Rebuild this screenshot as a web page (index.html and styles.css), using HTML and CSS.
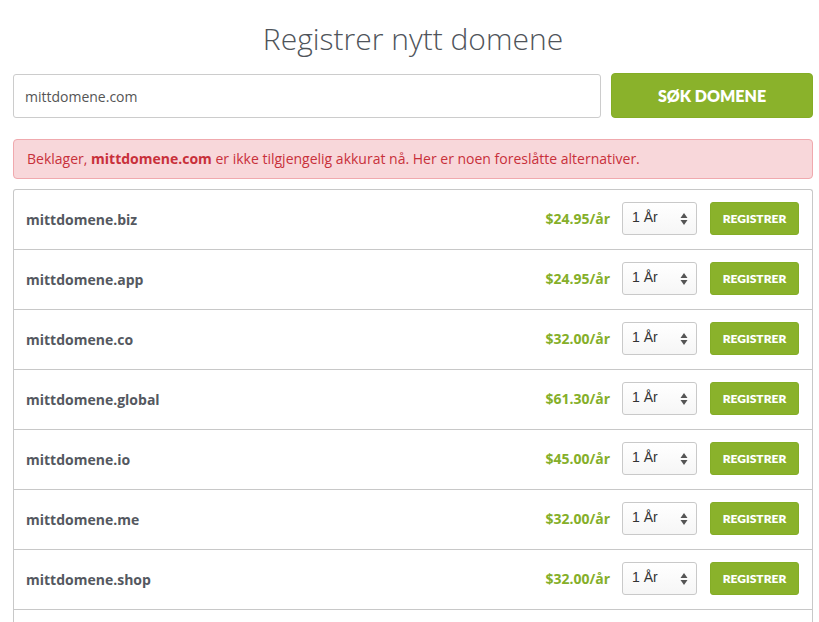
FILE: index.html
```html
<!DOCTYPE html>
<html lang="no">
<head>
<meta charset="utf-8">
<title>Registrer nytt domene</title>
<link rel="stylesheet" href="styles.css">
</head>
<body>
<div class="page">
  <h1 class="title">Registrer nytt domene</h1>
  <form class="search">
    <input class="search-input" type="text" value="mittdomene.com">
    <button class="search-btn" type="button">SØK DOMENE</button>
  </form>
  <div class="alert">Beklager, <strong>mittdomene.com</strong> er ikke tilgjengelig akkurat nå. Her er noen foreslåtte alternativer.</div>
  <div class="list">
    <div class="row"><span class="name">mittdomene.biz</span><span class="price">$24.95/år</span><div class="select"><span>1 År</span><svg class="arrows" width="8" height="14" viewBox="0 0 8 14"><path d="M4 1 L7.5 6 H0.5 Z M4 13 L7.5 8 H0.5 Z" fill="#555"/></svg></div><button class="reg" type="button">REGISTRER</button></div>
    <div class="row"><span class="name">mittdomene.app</span><span class="price">$24.95/år</span><div class="select"><span>1 År</span><svg class="arrows" width="8" height="14" viewBox="0 0 8 14"><path d="M4 1 L7.5 6 H0.5 Z M4 13 L7.5 8 H0.5 Z" fill="#555"/></svg></div><button class="reg" type="button">REGISTRER</button></div>
    <div class="row"><span class="name">mittdomene.co</span><span class="price">$32.00/år</span><div class="select"><span>1 År</span><svg class="arrows" width="8" height="14" viewBox="0 0 8 14"><path d="M4 1 L7.5 6 H0.5 Z M4 13 L7.5 8 H0.5 Z" fill="#555"/></svg></div><button class="reg" type="button">REGISTRER</button></div>
    <div class="row"><span class="name">mittdomene.global</span><span class="price">$61.30/år</span><div class="select"><span>1 År</span><svg class="arrows" width="8" height="14" viewBox="0 0 8 14"><path d="M4 1 L7.5 6 H0.5 Z M4 13 L7.5 8 H0.5 Z" fill="#555"/></svg></div><button class="reg" type="button">REGISTRER</button></div>
    <div class="row"><span class="name">mittdomene.io</span><span class="price">$45.00/år</span><div class="select"><span>1 År</span><svg class="arrows" width="8" height="14" viewBox="0 0 8 14"><path d="M4 1 L7.5 6 H0.5 Z M4 13 L7.5 8 H0.5 Z" fill="#555"/></svg></div><button class="reg" type="button">REGISTRER</button></div>
    <div class="row"><span class="name">mittdomene.me</span><span class="price">$32.00/år</span><div class="select"><span>1 År</span><svg class="arrows" width="8" height="14" viewBox="0 0 8 14"><path d="M4 1 L7.5 6 H0.5 Z M4 13 L7.5 8 H0.5 Z" fill="#555"/></svg></div><button class="reg" type="button">REGISTRER</button></div>
    <div class="row"><span class="name">mittdomene.shop</span><span class="price">$32.00/år</span><div class="select"><span>1 År</span><svg class="arrows" width="8" height="14" viewBox="0 0 8 14"><path d="M4 1 L7.5 6 H0.5 Z M4 13 L7.5 8 H0.5 Z" fill="#555"/></svg></div><button class="reg" type="button">REGISTRER</button></div>
  </div>
</div>
</body>
</html>
```
FILE: styles.css
```css
* { box-sizing: border-box; }
html, body { margin: 0; padding: 0; background: #fff; }
body { font-family: "Open Sans", "Liberation Sans", sans-serif; color: #555; overflow: hidden; height: 622px; }
.page { padding: 0 6px 0 13px; }
.title {
  margin: 18px 0 0;
  height: 42px;
  line-height: 42px;
  font-size: 30px;
  font-weight: 300;
  text-align: center;
  color: #4f545a;
}
.search { display: flex; gap: 10px; margin-top: 13px; align-items: flex-start; }
.search-input {
  flex: 1;
  height: 44px;
  margin-top: 1px;
  border: 1px solid #ccc;
  border-radius: 3px;
  padding: 0 11px;
  font-family: "Open Sans", sans-serif;
  font-size: 14px;
  color: #555;
  outline: none;
}
.search-btn {
  width: 202px;
  height: 45px;
  border: 1px solid #84ad26;
  border-radius: 4px;
  background: #8ab22b;
  color: #fff;
  font-family: "Lato", "Open Sans", sans-serif;
  font-weight: 800;
  font-size: 16px;
  padding: 0;
}
.alert {
  margin-top: 21px;
  height: 40px;
  border: 1px solid #f0a9ae;
  border-radius: 4px;
  background: #f8d7da;
  color: #c8303a;
  font-size: 14px;
  line-height: 38px;
  padding: 0 13px;
}
.alert strong { font-weight: 700; }
.list {
  margin-top: 10px;
  min-height: 440px;
  border: 1px solid #c8c8c8;
  border-bottom: none;
  border-radius: 3px 3px 0 0;
}
.row {
  display: flex;
  align-items: center;
  height: 60px;
  border-bottom: 1px solid #c8c8c8;
  padding: 0 13px 0 12px;
}
.name { flex: 1; font-weight: 700; font-size: 14px; color: #545860; }
.price { font-weight: 700; font-size: 14px; color: #85af29; margin-right: 12px; margin-bottom: 2px; }
.select {
  width: 75px;
  height: 33px;
  border: 1px solid #c9c9c9;
  border-radius: 3px;
  background: linear-gradient(#fff, #f6f6f6);
  display: flex;
  align-items: center;
  justify-content: space-between;
  padding: 0 8px 0 9px;
  font-family: "Liberation Sans", Arial, sans-serif;
  font-size: 14px;
  color: #333;
  margin-right: 13px;
  margin-bottom: 2px;
}
.select span { margin-bottom: 3px; }
.arrows { display: block; }
.reg {
  width: 89px;
  height: 33px;
  border: 1px solid #84ad26;
  border-radius: 3px;
  background: #8ab22b;
  color: #fff;
  font-family: "Lato", "Open Sans", sans-serif;
  font-weight: 800;
  font-size: 12px;
  padding: 0;
  margin-bottom: 2px;
}
```
